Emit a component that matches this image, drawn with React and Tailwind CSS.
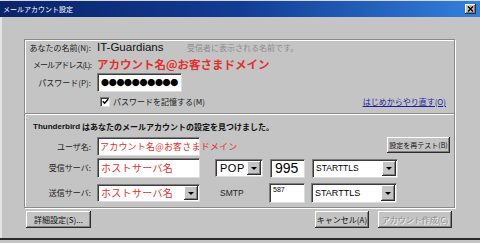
const sunken =
  "bg-white border border-t-[#7c7c7c] border-l-[#7c7c7c] border-r-[#dcdcdc] border-b-[#dcdcdc] shadow-[inset_1px_1px_#3c3c3c]";
const raised =
  "bg-[#c4c4c4] shadow-[inset_-1px_-1px_#2c2c2c,inset_1px_1px_#ffffff,inset_-2px_-2px_#808080]";

function DropBtn() {
  return (
    <div className={`w-[14px] h-full ${raised} flex items-center justify-center shrink-0`}>
      <div className="w-0 h-0 border-l-[3px] border-r-[3px] border-t-[3px] border-l-transparent border-r-transparent border-t-black" />
    </div>
  );
}

function Select({ w, children }) {
  return (
    <div className={`${sunken} ${w} h-full flex items-stretch p-[1px] pl-[2px]`}>
      <div className="flex-1 flex items-center min-w-0 overflow-visible">{children}</div>
      <DropBtn />
    </div>
  );
}

function Label({ children, tight }) {
  return (
    <div
      className={`w-[67px] shrink-0 text-right whitespace-nowrap text-[8px] leading-none text-[#1a1a1a] pr-[1px] ${
        tight ? "tracking-[-0.9px]" : ""
      }`}
    >
      {children}
    </div>
  );
}

export default function App() {
  return (
    <div className="w-[480px] h-[243px] overflow-hidden bg-[#c4c4c4] flex flex-col font-['Noto_Sans_CJK_JP',sans-serif] text-black">
      {/* title bar */}
      <div className="h-[17px] shrink-0 flex items-center bg-gradient-to-r from-[#0a246a] via-[#123c94] to-[#3480dc] border-t border-t-[#d8d8e8] pl-[3px] pr-[4px]">
        <span className="text-white text-[7px] leading-none whitespace-nowrap">メールアカウント設定</span>
        <div className={`ml-auto w-[11px] h-[10px] ${raised} flex items-center justify-center`}>
          <svg width="7" height="6" viewBox="0 0 7 6">
            <path d="M1 0.5 L6 5.5 M6 0.5 L1 5.5" stroke="#000" strokeWidth="1.4" />
          </svg>
        </div>
      </div>

      {/* body */}
      <div className="h-[221px] shrink-0 flex flex-col pl-[24px] pt-[22px] border-l-[2px] border-l-[#e4e4e4]">
        <div className="w-[431px] -ml-[2px] h-[169px] border border-[#8a8a8a] shadow-[inset_1px_1px_#ffffff,1px_1px_#ffffff] flex flex-col">
          {/* section 1 */}
          <div className="h-[73px] flex flex-col pb-[2px]">
            <div className="h-[16px] flex items-center">
              <Label>あなたの名前(N):</Label>
              <div className="ml-[5px] w-[90px] font-['Liberation_Sans',sans-serif] text-[11.5px] leading-none text-[#111]">
                IT-Guardians
              </div>
              <div className="text-[8px] leading-none text-[#8c8c8c] whitespace-nowrap">受信者に表示される名前です。</div>
            </div>
            <div className="h-[17px] flex items-center">
              <Label tight>メールアドレス(L):</Label>
              <div className="ml-[5px] text-[11.5px] font-bold leading-none text-[#e2302c] whitespace-nowrap">
                アカウント名@お客さまドメイン
              </div>
            </div>
            <div className="h-[19px] flex items-center">
              <Label>パスワード(P):</Label>
              <div className={`ml-[5px] w-[85px] h-[19px] ${sunken} flex items-center pl-[3px] overflow-hidden`}>
                <span className="text-[8px] leading-none tracking-[-0.3px] text-black whitespace-nowrap">●●●●●●●●●●</span>
              </div>
            </div>
            <div className="h-[19px] flex items-center pr-[8px]">
              <div className="w-[67px] shrink-0" />
              <div className={`ml-[8px] w-[10px] h-[10px] ${sunken} flex items-center justify-center`}>
                <svg width="7" height="7" viewBox="0 0 7 7">
                  <path d="M0.8 3.2 L2.6 5.2 L6.2 1.2" stroke="#000" strokeWidth="1.5" fill="none" />
                </svg>
              </div>
              <span className="ml-[3px] text-[8px] leading-none text-[#1a1a1a] whitespace-nowrap">パスワードを記憶する(M)</span>
              <span className="ml-auto text-[8px] leading-none text-[#1e1e9c] underline whitespace-nowrap">
                はじめからやり直す(O)
              </span>
            </div>
          </div>

          {/* divider */}
          <div className="h-[2px] border-t border-t-[#8a8a8a] bg-[#ffffff] shrink-0" />

          {/* section 2 */}
          <div className="flex-1 flex flex-col">
            <div className="mt-[6px] h-[12px] flex items-center pl-[8px] text-[8px] font-bold leading-none text-[#111] whitespace-nowrap">
              <span className="font-['Liberation_Sans',sans-serif]">Thunderbird</span>
              <span>&nbsp;はあなたのメールアカウントの設定を見つけました。</span>
            </div>
            <div className="mt-[4px] h-[19px] flex items-start pr-[4px]">
              <div className="h-full flex items-center">
                <Label>ユーザ名:</Label>
              </div>
              <div className={`ml-[5px] w-[103px] h-full ${sunken} flex items-center pl-[2px] overflow-visible`}>
                <span className="whitespace-nowrap text-[9px] leading-none text-[#e2302c] tracking-[0.2px]">
                  アカウント名@お客さまドメイン
                </span>
              </div>
              <div className={`ml-auto w-[63px] h-[16px] ${raised} flex items-center justify-center text-[7px] leading-none text-[#111] whitespace-nowrap`}>
                設定を再テスト(B)
              </div>
            </div>
            <div className="mt-[2px] h-[20px] flex items-center">
              <Label>受信サーバ:</Label>
              <div className={`ml-[5px] w-[103px] h-full ${sunken} flex items-center pl-[3px]`}>
                <span className="text-[10px] leading-none text-[#e2302c] tracking-[0.3px] whitespace-nowrap">ホストサーバ名</span>
              </div>
              <div className="ml-[15px] h-[18px]">
                <Select w="w-[48px]">
                  <span className="pl-[2px] font-['Liberation_Sans',sans-serif] text-[11px] leading-none tracking-[0.5px]">POP</span>
                </Select>
              </div>
              <div className={`ml-[7px] w-[35px] h-[19px] ${sunken} flex items-center pl-[4px]`}>
                <span className="font-['Liberation_Sans',sans-serif] text-[14px] leading-none">995</span>
              </div>
              <div className="ml-[7px] h-[19px]">
                <Select w="w-[86px]">
                  <span className="pl-[1px] font-['Liberation_Sans',sans-serif] text-[8.5px] leading-none">STARTTLS</span>
                </Select>
              </div>
            </div>
            <div className="mt-[5px] h-[20px] flex items-center">
              <Label>送信サーバ:</Label>
              <div className="ml-[5px] h-[18px]">
                <Select w="w-[103px]">
                  <span className="pl-[1px] text-[10px] leading-none text-[#e2302c] tracking-[0.3px] whitespace-nowrap">ホストサーバ名</span>
                </Select>
              </div>
              <div className="w-[69px] pl-[20px] font-['Liberation_Sans',sans-serif] text-[8.5px] leading-none text-[#222]">
                SMTP
              </div>
              <div className={`w-[36px] h-[20px] ${sunken} flex items-start pl-[3px] pt-[2px]`}>
                <span className="font-['Liberation_Sans',sans-serif] text-[7px] leading-none">587</span>
              </div>
              <div className="ml-[6px] h-[20px]">
                <Select w="w-[86px]">
                  <span className="pl-[1px] font-['Liberation_Sans',sans-serif] text-[9px] leading-none">STARTTLS</span>
                </Select>
              </div>
            </div>
          </div>
        </div>

        {/* bottom buttons */}
        <div className="mt-[3px] h-[17px] w-[431px] -ml-[2px] flex items-center pr-[3px]">
          <div className={`ml-[2px] w-[65px] h-full ${raised} flex items-center justify-center text-[8px] leading-none text-[#111] whitespace-nowrap`}>
            詳細設定(S)...
          </div>
          <div className={`ml-auto w-[54px] h-full ${raised} flex items-center justify-center text-[8px] leading-none text-[#111] whitespace-nowrap`}>
            キャンセル(A)
          </div>
          <div className={`ml-[9px] w-[74px] h-full ${raised} flex items-center justify-center text-[8px] leading-none text-[#8c8c8c] [text-shadow:1px_1px_#f4f4f4] whitespace-nowrap`}>
            アカウント作成(C)
          </div>
        </div>
      </div>
      <div className="h-[2px] shrink-0 bg-[#2a2a2a]" />
      <div className="flex-1 bg-[#c4c4c4]" />
    </div>
  );
}
